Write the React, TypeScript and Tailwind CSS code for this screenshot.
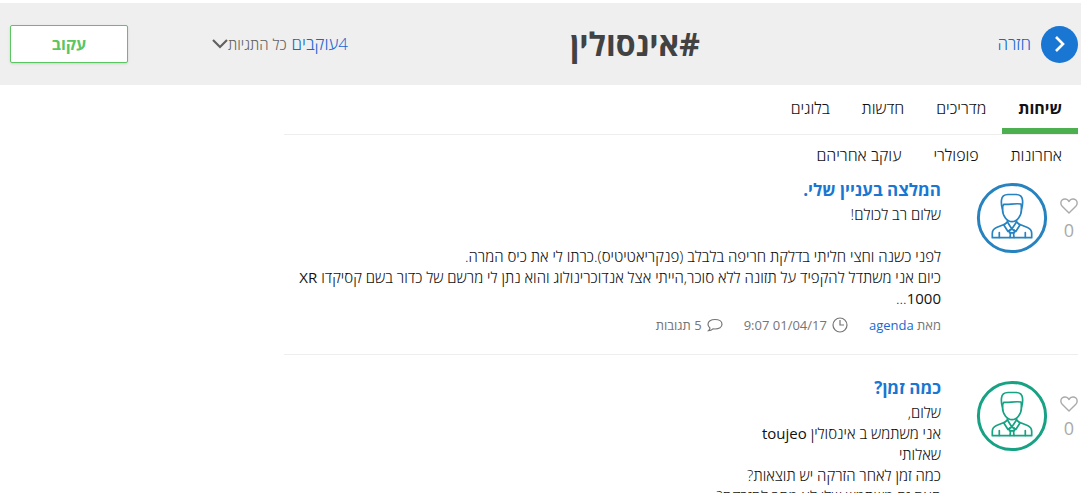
import React from "react";

type Post = {
  id: number;
  title: string;
  body: string;
  author: string;
  date: string;
  comments: number;
  likes: number;
  avatarColor: string;
};

const posts: Post[] = [
  {
    id: 1,
    title: "המלצה בעניין שלי.",
    body: "שלום רב לכולם!\n\nלפני כשנה וחצי חליתי בדלקת חריפה בלבלב (פנקריאטיטיס).כרתו לי את כיס המרה.\nכיום אני משתדל להקפיד על תזונה ללא סוכר,הייתי אצל אנדוכרינולוג והוא נתן לי מרשם של כדור בשם קסיקדו XR 1000...",
    author: "agenda",
    date: "01/04/17 9:07",
    comments: 5,
    likes: 0,
    avatarColor: "text-[#2783c0]",
  },
  {
    id: 2,
    title: "כמה זמן?",
    body: "שלום,\nאני משתמש ב אינסולין toujeo\nשאלותי\nכמה זמן לאחר הזרקה יש תוצאות?\nהאם זה משתמש שלי לא מהר להזרקה?",
    author: "agenda",
    date: "01/04/17 8:15",
    comments: 3,
    likes: 0,
    avatarColor: "text-[#17a284]",
  },
];

const tabs = ["שיחות", "מדריכים", "חדשות", "בלוגים"];
const filters = ["אחרונות", "פופולרי", "עוקב אחריהם"];

function Avatar({ className }: { className: string }) {
  return (
    <svg
      viewBox="0 0 72 72"
      className={`size-[72px] ${className}`}
      fill="none"
      stroke="currentColor"
      strokeWidth="1.7"
      strokeLinejoin="round"
      strokeLinecap="round"
      aria-hidden="true"
    >
      <circle cx="36" cy="36" r="33.6" strokeWidth="3" />
      {/* hair and face */}
      <path d="M26.500 27c-1.200-3-1.300-6-1-9 .4-4 2.500-5.500 6.500-5.500h8c4 0 6.100 1.500 6.500 5.500.3 3 .2 6-1 9" />
      <path d="M26.500 27c0-2.500.4-4 1.500-4.700 5 .6 11-1.300 17-.3.400 1.500.5 3 .5 5 0 7-4.500 12.700-9.500 12.700S26.500 34 26.500 27z" />
      {/* collar and tie */}
      <path d="M31.500 38.500v1.500l4.300 7 4.700-7v-1.500" />
      <path d="M31.500 40l-3.700 3 4.200 6.500 3.800-2.500 4 2.500 4.200-6.500-3.500-3" />
      <path d="M33.500 48v2.800h4.800V48M34.500 51l-.5 4.500m3.500-4.500.5 4.500" />
      {/* shoulders */}
      <path d="M28 42.500l-7.500 3c-3 1.200-4.200 3-4.200 6v4.200h39.400v-4.200c0-3-1.200-4.800-4.200-6l-7.500-3" />
      <path d="M23.300 50.500v5m26-5v5" />
    </svg>
  );
}

function Heart() {
  return (
    <svg viewBox="0 0 18 16" className="h-4 w-[18px]" fill="none" stroke="currentColor" strokeWidth="1.4" strokeLinejoin="round" aria-hidden="true">
      <path d="M9 15 2.200 8.300C.3 6.300.5 3.500 2.100 2c1.700-1.500 4.500-1.400 6 .3L9 3.500l.9-1.200c1.500-1.700 4.300-1.800 6-.3 1.600 1.500 1.800 4.300-.1 6.300z" />
    </svg>
  );
}

// Hebrew is set light, latin words and numbers keep the regular weight
function BodyText({ text }: { text: string }) {
  const parts = text.split(/([A-Za-z0-9]+)/);
  return (
    <p className="text-[15px] leading-[21px] font-light whitespace-pre-line">
      {parts.map((part, i) =>
        i % 2 === 1 ? (
          <span key={i} className="font-normal">{part}</span>
        ) : (
          part
        )
      )}
    </p>
  );
}

function PostItem({ post }: { post: Post }) {
  return (
    <article className="mb-[21px] flex items-start border-b border-[#eeeeee] pb-[21px]">
      <button type="button" aria-label="אהבתי" className="mt-5 flex w-[18px] shrink-0 flex-col items-center text-[#aaaaaa]">
        <Heart />
        <span className="mt-1 text-lg leading-6">{post.likes}</span>
      </button>
      <div className="ms-3 mt-1 shrink-0">
        <Avatar className={post.avatarColor} />
      </div>
      <div className="ms-[35px] min-w-0 flex-1">
        <h2 className="mb-0.5 text-[17px] leading-6 font-bold">
          <a href="#" className="text-[#1976d2]">{post.title}</a>
        </h2>
        <BodyText text={post.body} />
        <div className="mt-2 flex items-center text-[13px] leading-4 text-[#757575]">
          <span>
            מאת <a href="#" className="text-[#1967d2]">{post.author}</a>
          </span>
          <span className="ms-[21px] flex items-center gap-[5px]">
            <svg viewBox="0 0 16 16" className="size-4" fill="none" stroke="currentColor" strokeWidth="1.2" aria-hidden="true">
              <circle cx="8" cy="8" r="7" />
              <path d="M8 3v5h4" />
            </svg>
            {post.date}
          </span>
          <span className="ms-[21px] flex items-center gap-[5px]">
            <svg viewBox="0 0 16 14" className="h-[14px] w-4" fill="none" stroke="currentColor" strokeWidth="1.2" aria-hidden="true">
              <path d="M8 1.500c4 0 7 2 7 4.800s-3 4.700-7 4.700l-2-.2c-1 1-2.500 1.900-4.500 1.900 1-.8 1.500-1.700 1.400-2.700C1.700 9 1 7.800 1 6.300c0-2.800 3-4.800 7-4.800z" />
            </svg>
            {post.comments} תגובות
          </span>
        </div>
      </div>
    </article>
  );
}

export default function App() {
  return (
    <div dir="rtl" className="h-screen overflow-hidden bg-white pt-[3px] font-['Open_Sans','Noto_Sans',sans-serif] text-[#111111]">
      <header className="grid grid-cols-12 items-center bg-[#efefef] py-[22px] ps-[3px] pe-[10px]">
        <a href="#" className="col-span-3 flex items-center gap-2.5 text-[17px] font-light text-[#1967d2]">
          <span className="flex size-[37px] items-center justify-center rounded-full bg-[#1976d2] text-white">
            <svg viewBox="0 0 12 18" className="h-[18px] w-3" fill="none" stroke="currentColor" strokeWidth="2.6" aria-hidden="true">
              <path d="m2 2 7 7-7 7" />
            </svg>
          </span>
          חזרה
        </a>
        <h1 className="col-span-4 pe-1 text-center text-[32px] leading-9 font-bold text-[#424242]">#אינסולין</h1>
        <div className="col-span-4 col-start-9 flex items-center justify-between ps-[18px]">
          <div className="flex items-center gap-[5px] whitespace-nowrap">
            <a href="#" className="text-[17px] font-light text-[#1967d2]">4עוקבים</a>
            <button type="button" className="flex items-center text-[15px] font-light text-[#616161]">
              כל התגיות
              <svg viewBox="0 0 16 10" className="h-[10px] w-4" fill="none" stroke="currentColor" strokeWidth="2.2" aria-hidden="true">
                <path d="m1 1 7 7 7-7" />
              </svg>
            </button>
          </div>
          <button type="button" className="h-[38px] w-[118px] rounded-xs border border-[#5ac561] bg-white text-base font-bold text-[#5ac561] shadow-sm">
            עקוב
          </button>
        </div>
      </header>

      <main className="ms-[3px] me-[26.3%]">
        <nav className="flex border-b border-[#eeeeee]">
          {tabs.map((tab, i) => (
            <a
              key={tab}
              href="#"
              className={
                i === 0
                  ? "border-b-[6px] border-[#4caf50] px-4 pt-[11px] pb-2 font-bold"
                  : "border-b-[6px] border-transparent px-4 pt-[11px] pb-2 font-light"
              }
            >
              {tab}
            </a>
          ))}
        </nav>
        <nav className="flex gap-8 px-4 pt-2 pb-[11px] font-light">
          {filters.map((filter) => (
            <a key={filter} href="#">{filter}</a>
          ))}
        </nav>
        {posts.map((post) => (
          <PostItem key={post.id} post={post} />
        ))}
      </main>
    </div>
  );
}
